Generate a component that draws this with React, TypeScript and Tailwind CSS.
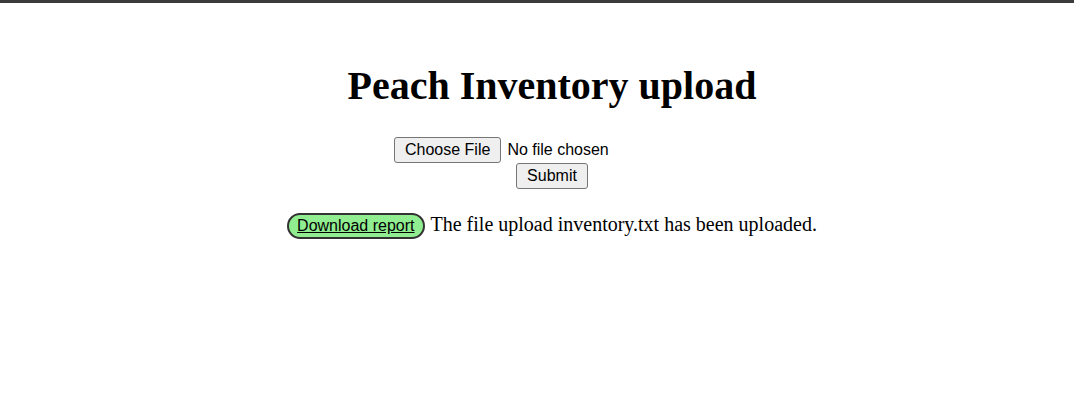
export default function App() {
  return (
    <div className="min-h-screen bg-white text-black">
      {/* top bar */}
      <div className="h-[3px] bg-[#3b3b3b]" />

      <div className="flex flex-col items-center pl-[30px]">
        <h1 className="mt-[60px] text-[40px] leading-[46px] font-bold font-['Liberation_Serif','Times_New_Roman',serif]">
          Peach Inventory upload
        </h1>

        {/* upload form */}
        <form className="mt-[28px] flex flex-col items-center font-['Liberation_Sans',Arial,sans-serif] text-[16px]">
          <div className="flex w-[316px] items-center">
            <button
              type="button"
              className="h-[26px] rounded-[3px] border border-[#767676] bg-[#efefef] px-[10px] leading-[18px]"
            >
              Choose File
            </button>
            <span className="ml-[6px] leading-[18px]">No file chosen</span>
          </div>
          <button
            type="button"
            className="h-[26px] rounded-[3px] border border-[#767676] bg-[#efefef] px-[10px] leading-[18px]"
          >
            Submit
          </button>
        </form>

        {/* result row */}
        <div className="mt-[20px] flex items-baseline">
          <a
            href="#"
            className="rounded-full border-2 border-[#333333] bg-[#90ee90] px-[8px] py-[2px] font-['Liberation_Sans',Arial,sans-serif] text-[16px] leading-[18px] text-black underline"
          >
            Download report
          </a>
          <span className="ml-[6px] font-['Liberation_Serif','Times_New_Roman',serif] text-[20px]">
            The file upload inventory.txt has been uploaded.
          </span>
        </div>
      </div>
    </div>
  );
}
